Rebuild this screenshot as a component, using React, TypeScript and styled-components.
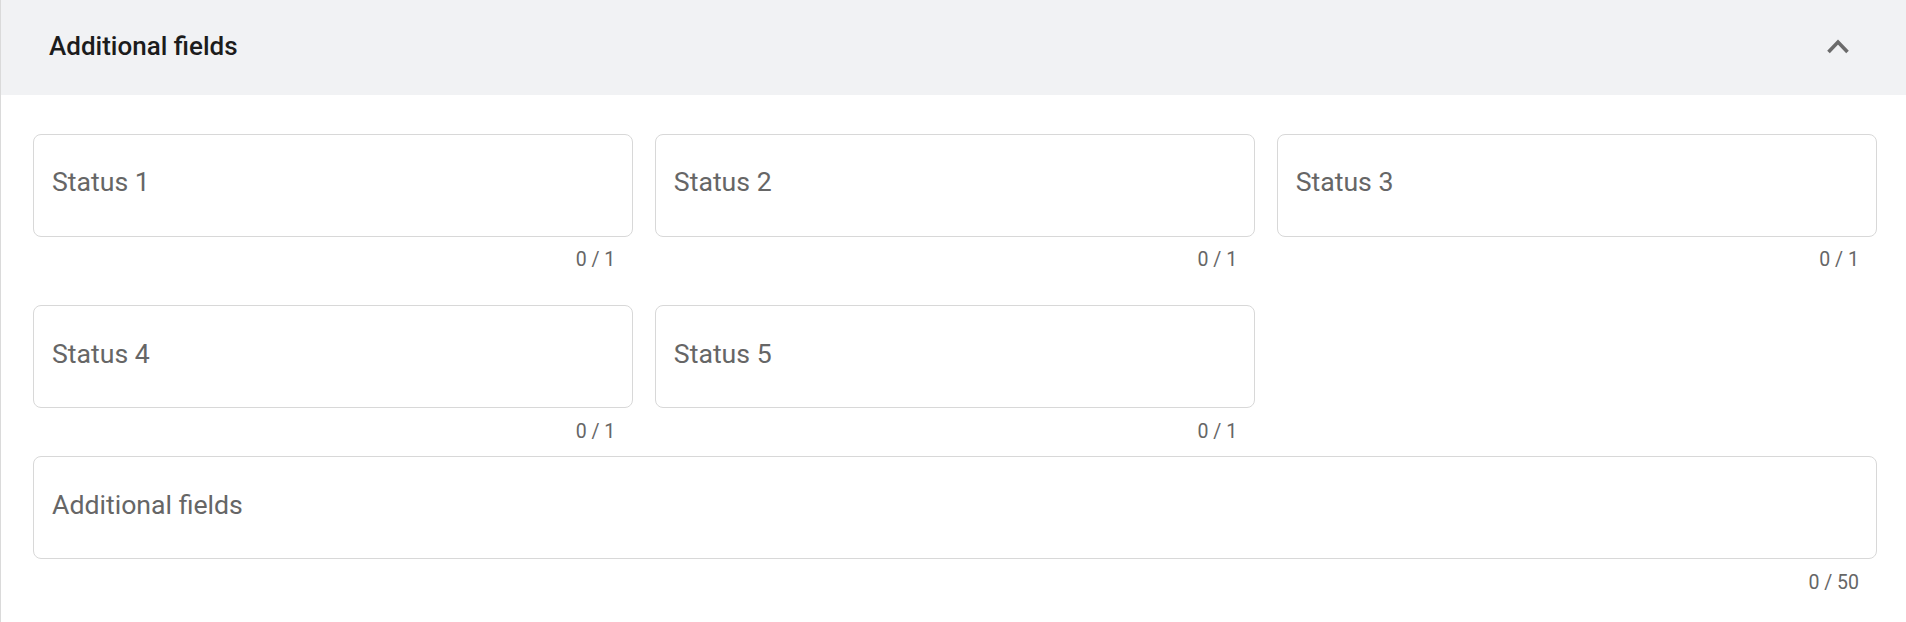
import React from "react";
import styled, { createGlobalStyle } from "styled-components";

const GlobalStyle = createGlobalStyle`
  html, body {
    margin: 0;
    padding: 0;
    background: #ffffff;
    font-family: Roboto, "Liberation Sans", Arial, sans-serif;
  }
  * {
    box-sizing: border-box;
  }
`;

interface FieldProps {
  label: string;
  max: number;
}

const statusFields: FieldProps[] = [
  { label: "Status 1", max: 1 },
  { label: "Status 2", max: 1 },
  { label: "Status 3", max: 1 },
  { label: "Status 4", max: 1 },
  { label: "Status 5", max: 1 },
];

const ExpandLess = () => (
  <svg width="42" height="42" viewBox="0 0 42 42" fill="none">
    <polyline
      points="11.5,25 21,15 30.5,25"
      stroke="#6b6b6b"
      strokeWidth="3.6"
      strokeLinecap="butt"
      strokeLinejoin="miter"
    />
  </svg>
);

const TextField: React.FC<FieldProps> = ({ label, max }) => (
  <FieldWrap>
    <FieldBox>{label}</FieldBox>
    <Helper>
      0 / {max}
    </Helper>
  </FieldWrap>
);

const App = () => {
  return (
    <>
      <GlobalStyle />
      <Panel>
        <Header>
          <Title>Additional fields</Title>
          <ToggleButton aria-label="collapse">
            <ExpandLess />
          </ToggleButton>
        </Header>

        <Body>
          <StatusGrid>
            {statusFields.map((f) => (
              <TextField key={f.label} label={f.label} max={f.max} />
            ))}
          </StatusGrid>
          <TextField label="Additional fields" max={50} />
        </Body>
      </Panel>
    </>
  );
};

export default App;

const Panel = styled.div`
  min-height: 622px;
  border-left: 1px solid #dadada;
  background: #ffffff;
`;

const Header = styled.div`
  height: 95px;
  background: #f1f2f4;
  display: flex;
  align-items: center;
  justify-content: space-between;
  padding: 0 47px 0 48px;
`;

const Title = styled.div`
  font-size: 26px;
  font-weight: 500;
  color: #1c1c1c;
  line-height: 32px;
  padding-bottom: 3px;
`;

const ToggleButton = styled.button`
  border: none;
  background: transparent;
  padding: 0;
  width: 42px;
  height: 42px;
  display: flex;
  align-items: center;
  justify-content: center;
  cursor: pointer;
`;

const Body = styled.div`
  padding: 38.5px 29px 16px 32px;
`;

const StatusGrid = styled.div`
  display: grid;
  grid-template-columns: repeat(3, 1fr);
  column-gap: 21.5px;
  row-gap: 21.3px;
`;

const FieldWrap = styled.div`
  display: flex;
  flex-direction: column;
`;

const FieldBox = styled.div`
  height: 103px;
  border: 1.5px solid #d8d8d8;
  border-radius: 8px;
  padding: 31.5px 17px 0 18px;
  font-size: 26.67px;
  line-height: 32px;
  color: #666666;
`;

const Helper = styled.div`
  height: 47.7px;
  padding: 11.5px 18px 0;
  text-align: right;
  font-size: 19.5px;
  line-height: 24px;
  color: #666666;
`;
